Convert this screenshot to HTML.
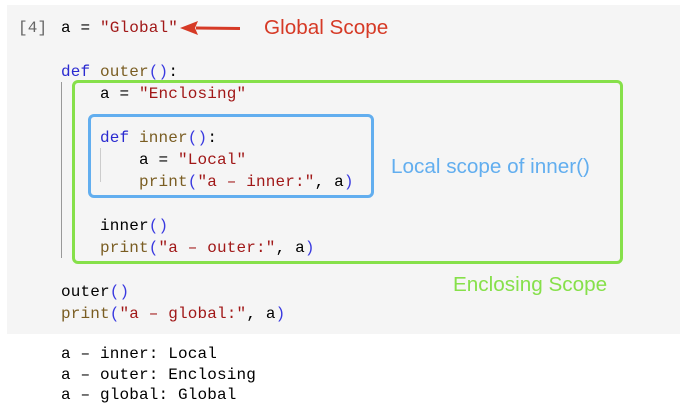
<!DOCTYPE html>
<html><head><style>
body{margin:0;width:680px;height:413px;background:#fff;position:relative;overflow:hidden;font-family:"Liberation Mono",monospace;}
.bg{position:absolute;left:7px;top:5px;width:673px;height:329px;background:#f5f5f5;}
.l{position:absolute;font-size:16px;letter-spacing:0.15px;white-space:pre;line-height:22px;color:#000;}
.k{color:#2a2ad0}.s{color:#a11818}.f{color:#7a5d22}.p{color:#3a3ae0}
.n{position:absolute;font-family:"Liberation Sans",sans-serif;font-size:20.7px;white-space:nowrap;}
.box{position:absolute;border-style:solid;border-radius:6px;box-sizing:border-box;}
.vl{position:absolute;width:1px;background:#999;}
</style></head><body>
<div class="bg"></div>
<div class="l" style="left:18px;top:17px;color:#666">[4]</div>
<div class="l" style="left:61px;top:17px">a = <span class="s">"Global"</span></div>
<div class="l" style="left:61px;top:61px"><span class="k">def</span> <span class="f">outer</span><span class="p">()</span>:</div>
<div class="l" style="left:100px;top:83px">a = <span class="s">"Enclosing"</span></div>
<div class="l" style="left:100px;top:127px"><span class="k">def</span> <span class="f">inner</span><span class="p">()</span>:</div>
<div class="l" style="left:139px;top:149px">a = <span class="s">"Local"</span></div>
<div class="l" style="left:139px;top:171px"><span class="f">print</span><span class="p">(</span><span class="s">"a – inner:"</span>, a<span class="p">)</span></div>
<div class="l" style="left:100px;top:215px">inner<span class="p">()</span></div>
<div class="l" style="left:100px;top:237px"><span class="f">print</span><span class="p">(</span><span class="s">"a – outer:"</span>, a<span class="p">)</span></div>
<div class="l" style="left:61px;top:281px">outer<span class="p">()</span></div>
<div class="l" style="left:61px;top:303px"><span class="f">print</span><span class="p">(</span><span class="s">"a – global:"</span>, a<span class="p">)</span></div>
<div class="l" style="left:61px;top:344px;line-height:20.5px">a – inner: Local
a – outer: Enclosing
a – global: Global</div>
<div class="vl" style="left:61px;top:82px;height:176px"></div>
<div class="vl" style="left:100px;top:148px;height:34px;background:#ccc"></div>
<div class="box" style="left:72px;top:80px;width:551px;height:184px;border-width:3px;border-color:#86e04a"></div>
<div class="box" style="left:88px;top:114px;width:286px;height:84px;border-width:3px;border-color:#62aeef"></div>
<svg style="position:absolute;left:178px;top:20px" width="64" height="16"><path d="M62 8.5 L18 8" stroke="#d63a26" stroke-width="3" fill="none"/><path d="M2 8 L20 1 L17 8 L20 15 Z" fill="#d63a26"/></svg>
<div class="n" style="left:264px;top:16px;color:#d63a26">Global Scope</div>
<div class="n" style="left:391px;top:155px;color:#62aeef">Local scope of inner()</div>
<div class="n" style="left:453px;top:273px;color:#86e04a">Enclosing Scope</div>
</body></html>
